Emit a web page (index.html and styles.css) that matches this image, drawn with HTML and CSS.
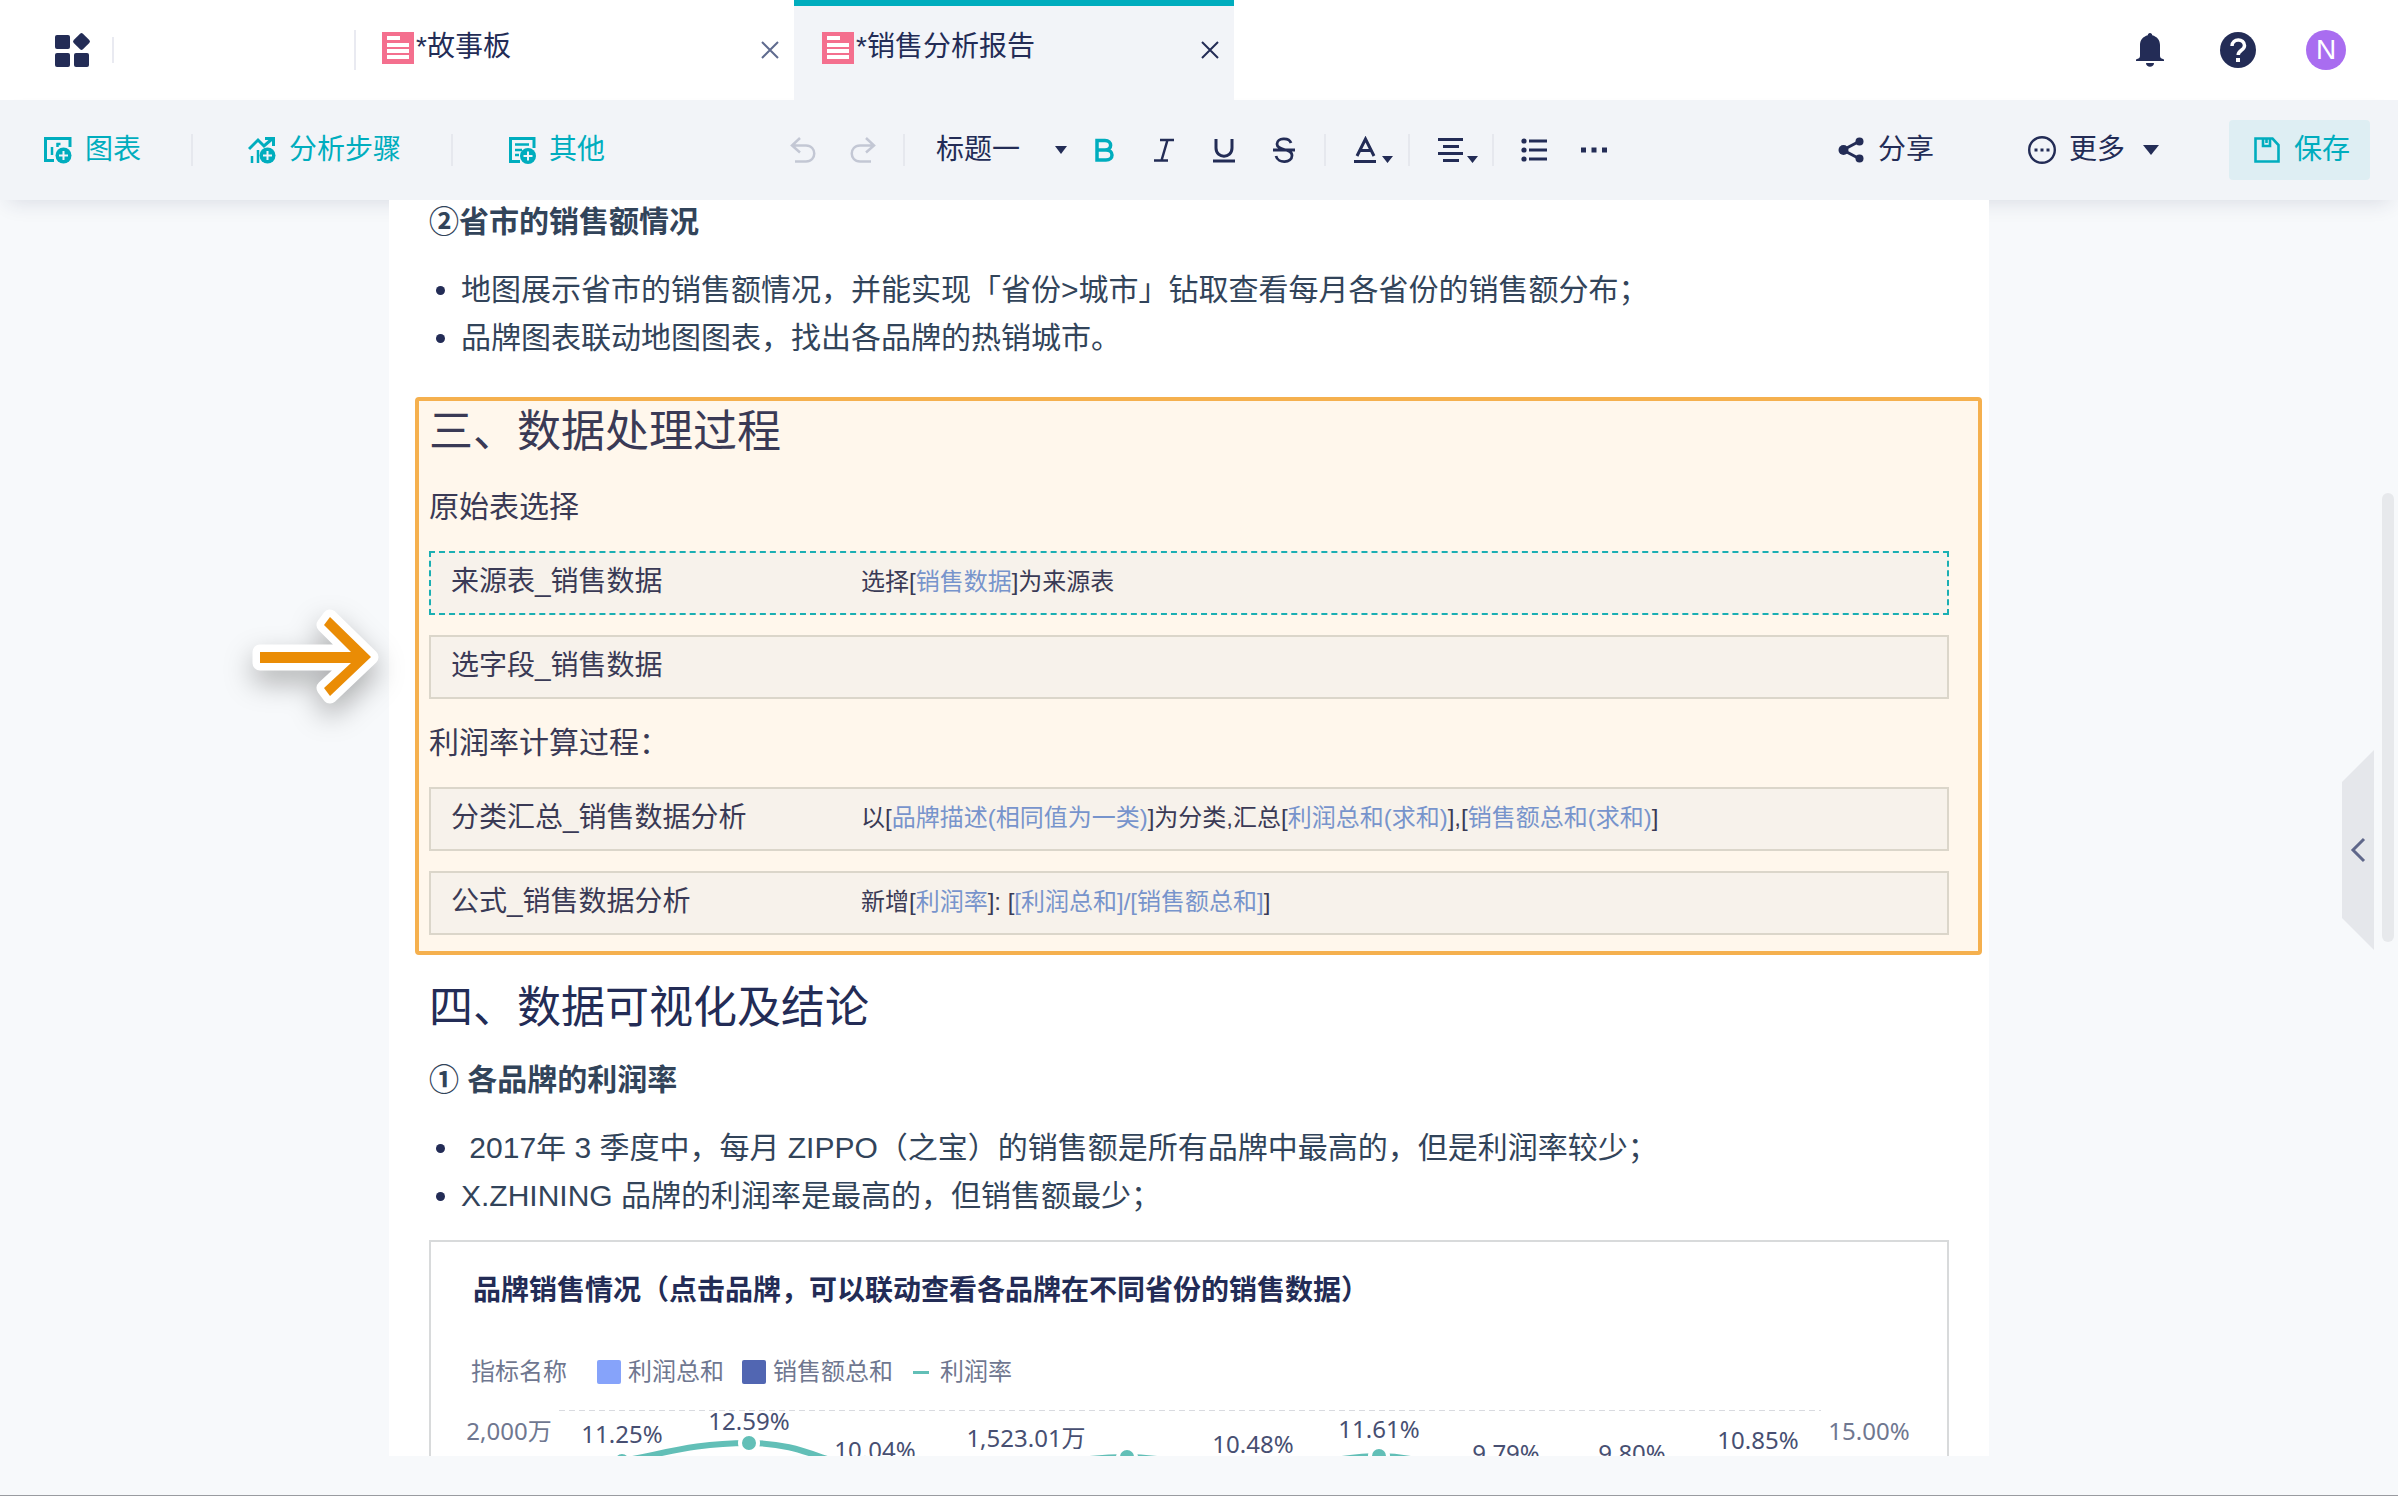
FILE: index.html
```html
<!DOCTYPE html>
<html lang="zh-CN">
<head>
  <meta charset="UTF-8">
  <meta name="viewport" content="width=device-width, initial-scale=1.0">
  <title>销售分析报告</title>
  <link rel="stylesheet" href="styles.css">
</head>
<body>
  <header class="topbar">
    <button class="icon-btn home" aria-label="主页">
      <svg width="36" height="36" viewBox="0 0 36 36" fill="currentColor">
        <rect x="0" y="3" width="15" height="14" rx="2"/>
        <rect x="0" y="21" width="15" height="14" rx="2"/>
        <rect x="19" y="21" width="15" height="14" rx="2"/>
        <rect x="20" y="3" width="13" height="13" rx="2" transform="rotate(45 26.5 9.5)"/>
      </svg>
    </button>
    <nav class="tabs">
      <div class="tab">
        <svg class="doc" width="32" height="32" viewBox="0 0 32 32">
          <rect width="32" height="32" fill="#f46f8e"/>
          <path d="M5 4h13v4H5zM5 11h22v4H5zM5 17h22v4H5zM5 23h22v4H5z" fill="#fff"/>
        </svg>
        <a href="#" class="tab-name">*故事板</a>
        <button class="icon-btn close" aria-label="关闭">
          <svg width="20" height="20" viewBox="0 0 20 20" fill="none" stroke="currentColor" stroke-width="2"><path d="M2 2l16 16M18 2L2 18"/></svg>
        </button>
      </div>
      <div class="tab active">
        <svg class="doc" width="32" height="32" viewBox="0 0 32 32">
          <rect width="32" height="32" fill="#f46f8e"/>
          <path d="M5 4h13v4H5zM5 11h22v4H5zM5 17h22v4H5zM5 23h22v4H5z" fill="#fff"/>
        </svg>
        <a href="#" class="tab-name">*销售分析报告</a>
        <button class="icon-btn close" aria-label="关闭">
          <svg width="20" height="20" viewBox="0 0 20 20" fill="none" stroke="currentColor" stroke-width="2"><path d="M2 2l16 16M18 2L2 18"/></svg>
        </button>
      </div>
    </nav>
    <div class="account">
      <button class="icon-btn" aria-label="消息">
        <svg width="36" height="36" viewBox="0 0 36 36" fill="currentColor">
          <path d="M18 1c1.500 0 2 1 2.200 2.200C25 4.500 28 8 28 13v11c0 2 1.500 2.500 4 3.500V29H4v-1.500c2.500-1 4-1.500 4-3.500V13c0-5 3-8.500 7.800-9.800C16 2 16.500 1 18 1zM14 31h8c0 5-8 5-8 0z"/>
        </svg>
      </button>
      <button class="icon-btn" aria-label="帮助">
        <svg width="36" height="36" viewBox="0 0 36 36">
          <circle cx="18" cy="18" r="18" fill="currentColor"/>
          <path d="M12 14c0-8 12.500-8 12.500-.5 0 5-6.300 4.500-6.300 9.500" fill="none" stroke="#fff" stroke-width="3.500"/>
          <rect x="16" y="26" width="4" height="4" fill="#fff"/>
        </svg>
      </button>
      <button class="avatar">N</button>
    </div>
  </header>

  <div class="toolbar">
    <div class="group">
      <button class="tool insert">
        <svg width="28" height="28" viewBox="0 0 28 28" fill="none" stroke="currentColor" stroke-width="3">
          <path d="M26 11V2.500H1.500v22H10"/><path d="M8 11v8M12.500 8h4M13.500 7v4" stroke-width="2.500"/>
          <circle cx="19.500" cy="19.500" r="8" fill="currentColor" stroke="none"/><path d="M19.500 15v9M15 19.500h9" stroke="#f2f4f8" stroke-width="2"/>
        </svg>图表
      </button>
      <span class="divider"></span>
      <button class="tool insert">
        <svg width="28" height="28" viewBox="0 0 28 28" fill="none" stroke="currentColor" stroke-width="3">
          <path d="M1 13l9-9 6 6 8-7M17 2.500h8.500V10"/><path d="M4 20v7M10 14v13" stroke-width="2.500"/>
          <circle cx="19.500" cy="19.500" r="8" fill="currentColor" stroke="none"/><path d="M19.500 15v9M15 19.500h9" stroke="#f2f4f8" stroke-width="2"/>
        </svg>分析步骤
      </button>
      <span class="divider"></span>
      <button class="tool insert">
        <svg width="28" height="28" viewBox="0 0 28 28" fill="none" stroke="currentColor" stroke-width="3">
          <path d="M26 12V2.500H2.500v23H12"/><path d="M7 8.500h14M7 14h7M7 19h4" stroke-width="2.500"/>
          <circle cx="20" cy="20" r="8" fill="currentColor" stroke="none"/><path d="M20 15.500v9M15.500 20h9" stroke="#f2f4f8" stroke-width="2"/>
        </svg>其他
      </button>
    </div>

    <div class="group edit">
      <button class="fmt muted" aria-label="撤销">
        <svg width="28" height="28" viewBox="0 0 28 28" fill="none" stroke="currentColor" stroke-width="2.500"><path d="M11 2L3 9.500l8 7M3 9.500h14c11 0 11 16 0 16H6"/></svg>
      </button>
      <button class="fmt muted" aria-label="重做">
        <svg width="28" height="28" viewBox="0 0 28 28" fill="none" stroke="currentColor" stroke-width="2.500"><path d="M17 2l8 7.500-8 7M25 9.500H11c-11 0-11 16 0 16h11"/></svg>
      </button>
      <span class="divider"></span>
      <div class="select-wrap">
        <select class="style-select" aria-label="段落样式">
          <option>标题一</option>
          <option>标题二</option>
          <option>正文</option>
        </select>
      </div>
      <button class="fmt on" aria-label="加粗">
        <svg width="28" height="28" viewBox="0 0 28 28" fill="none" stroke="currentColor" stroke-width="3.500"><path d="M7 4.500h8c7.500 0 7.500 9.500 0 9.500H7h9c8 0 8 10 0 10H7zM7 3v22"/></svg>
      </button>
      <button class="fmt" aria-label="斜体">
        <svg width="28" height="28" viewBox="0 0 28 28" fill="none" stroke="currentColor" stroke-width="2.500"><path d="M10 4h14M4 24.500h14M17.500 4l-6 20.500"/></svg>
      </button>
      <button class="fmt" aria-label="下划线">
        <svg width="28" height="28" viewBox="0 0 28 28" fill="none" stroke="currentColor" stroke-width="3"><path d="M6 3v9c0 11 16 11 16 0V3M3 25h22"/></svg>
      </button>
      <button class="fmt" aria-label="删除线">
        <svg width="28" height="28" viewBox="0 0 28 28" fill="none" stroke="currentColor" stroke-width="2.800"><path d="M21 7C19 1 7 1.500 7 8c0 7 15 4 15 11.500C22 27 8 28 6 20M3 14h22"/></svg>
      </button>
      <span class="divider"></span>
      <button class="fmt wide" aria-label="文字颜色">
        <svg width="44" height="28" viewBox="0 0 44 28"><path d="M3 20L11.500 3 20 20M6 14.500h11" fill="none" stroke="currentColor" stroke-width="3"/><path d="M0 24h22v3H0zM28 20h11l-5.500 7z" fill="currentColor"/></svg>
      </button>
      <span class="divider"></span>
      <button class="fmt wide" aria-label="对齐">
        <svg width="44" height="28" viewBox="0 0 44 28" fill="currentColor"><path d="M0 2h25v3H0zM5 9h16v3H5zM0 16h25v3H0zM5 23h16v3H5zM29 20h11l-5.500 7z"/></svg>
      </button>
      <span class="divider"></span>
      <button class="fmt" aria-label="列表">
        <svg width="28" height="28" viewBox="0 0 28 28" fill="currentColor"><circle cx="4" cy="5" r="2.600"/><circle cx="4" cy="14" r="2.600"/><circle cx="4" cy="23" r="2.600"/><path d="M9 3.500h18v3H9zM9 12.500h18v3H9zM9 21.500h18v3H9z"/></svg>
      </button>
      <button class="fmt" aria-label="更多格式">
        <svg width="28" height="28" viewBox="0 0 28 28" fill="currentColor"><path d="M1 11.500h5v5H1zM11.500 11.500h5v5h-5zM22 11.500h5v5h-5z"/></svg>
      </button>
    </div>

    <div class="group actions">
      <button class="tool">
        <svg width="28" height="28" viewBox="0 0 28 28" fill="currentColor"><path d="M22 5.500L6 14l16 8.500" fill="none" stroke="currentColor" stroke-width="3"/><circle cx="6.500" cy="14" r="5"/><circle cx="22.500" cy="5.500" r="4"/><circle cx="22.500" cy="22.500" r="4"/></svg>分享
      </button>
      <button class="tool more">
        <svg width="28" height="28" viewBox="0 0 28 28" fill="currentColor"><circle cx="14" cy="14" r="12.800" fill="none" stroke="currentColor" stroke-width="2.400"/><path d="M6.500 12.500h3v3h-3zM12.500 12.500h3v3h-3zM18.500 12.500h3v3h-3z"/></svg>更多<span class="caret"></span>
      </button>
      <button class="tool save">
        <svg width="28" height="28" viewBox="0 0 28 28" fill="none" stroke="currentColor" stroke-width="2.600"><path d="M2.500 2.500h17l6 6.500v16.500h-23z"/><path d="M10 2.500V10h7V2.500"/><path d="M13.500 3v4"/></svg>保存
      </button>
    </div>
  </div>

  <main class="workspace">
    <article class="paper">
      <h3>②省市的销售额情况</h3>
      <ul>
        <li>地图展示省市的销售额情况，并能实现「省份&gt;城市」钻取查看每月各省份的销售额分布；</li>
        <li>品牌图表联动地图图表，找出各品牌的热销城市。</li>
      </ul>

      <section class="highlight">
        <svg class="pointer" width="128" height="98" viewBox="0 0 128 98">
          <path d="M77 9l41 40-41 39-6-8 27-25H7V44h91L71 17z" fill="#fff" stroke="#fff" stroke-width="15" stroke-linejoin="round"/>
          <path d="M77 9l41 40-41 39-6-8 27-25H7V44h91L71 17z" fill="#ea8c05"/>
        </svg>
        <h2>三、数据处理过程</h2>
        <p>原始表选择</p>
        <div class="step selected">
          <span class="step-name">来源表_销售数据</span>
          <span class="step-info">选择[<em>销售数据</em>]为来源表</span>
        </div>
        <div class="step">
          <span class="step-name">选字段_销售数据</span>
        </div>
        <p>利润率计算过程：</p>
        <div class="step">
          <span class="step-name">分类汇总_销售数据分析</span>
          <span class="step-info">以[<em>品牌描述(相同值为一类)</em>]为分类,汇总[<em>利润总和(求和)</em>],[<em>销售额总和(求和)</em>]</span>
        </div>
        <div class="step">
          <span class="step-name">公式_销售数据分析</span>
          <span class="step-info">新增[<em>利润率</em>]: [<em>[利润总和]/[销售额总和]</em>]</span>
        </div>
      </section>

      <h2>四、数据可视化及结论</h2>
      <h3>① 各品牌的利润率</h3>
      <ul>
        <li>&nbsp;2017年 3 季度中，每月 ZIPPO（之宝）的销售额是所有品牌中最高的，但是利润率较少；</li>
        <li>X.ZHINING 品牌的利润率是最高的，但销售额最少；</li>
      </ul>

      <section class="card">
        <h4>品牌销售情况（点击品牌，可以联动查看各品牌在不同省份的销售数据）</h4>
        <div class="legend">
          <span class="legend-title">指标名称</span>
          <span class="legend-item"><i class="swatch light"></i>利润总和</span>
          <span class="legend-item"><i class="swatch dark"></i>销售额总和</span>
          <span class="legend-item line"><i class="dash"></i>利润率</span>
        </div>
        <svg class="chart" viewBox="0 0 1516 120">
          <path class="grid" d="M128 22.500H1390"/>
          <path class="curve" d="M191 73C235 65 265 55 318 55S390 74 444 84S520 88 570 83S650 69 696 69S770 82 822 82S900 68 948 68S1020 88 1075 88S1150 90 1201 90S1280 79 1327 77"/>
          <g class="dots">
            <circle cx="191" cy="73" r="9"/>
            <circle cx="318" cy="55" r="9"/>
            <circle cx="444" cy="84" r="9"/>
            <circle cx="570" cy="83" r="9"/>
            <circle cx="696" cy="69" r="9"/>
            <circle cx="822" cy="82" r="9"/>
            <circle cx="948" cy="68" r="9"/>
          </g>
          <g class="labels">
            <text x="191" y="55">11.25%</text>
            <text x="318" y="42">12.59%</text>
            <text x="444" y="71">10.04%</text>
            <text x="595" y="59">1,523.01万</text>
            <text x="822" y="65">10.48%</text>
            <text x="948" y="50">11.61%</text>
            <text x="1075" y="74">9.79%</text>
            <text x="1201" y="74">9.80%</text>
            <text x="1327" y="61">10.85%</text>
          </g>
          <g class="labels axis">
            <text x="78" y="52">2,000万</text>
            <text x="1438" y="52">15.00%</text>
          </g>
        </svg>
      </section>
    </article>
    <button class="panel-toggle" aria-label="展开面板">
      <svg width="16" height="26" viewBox="0 0 16 26" fill="none" stroke="currentColor" stroke-width="3"><path d="M14 2L3 13l11 11"/></svg>
    </button>
    <div class="scroll-thumb"></div>
  </main>
  <footer class="bottom"></footer>
</body>
</html>
```
FILE: styles.css
```css
* {
  box-sizing: border-box;
}

body {
  display: flex;
  flex-direction: column;
  height: 100vh;
  margin: 0;
  overflow: hidden;
  font-family: "Liberation Sans", "Noto Sans CJK SC", sans-serif;
  font-size: 28px;
  line-height: 40px;
  color: #232c56;
  background-color: #f7f9fb;
}

button {
  padding: 0;
  border: none;
  background: none;
  font: inherit;
  color: inherit;
  cursor: pointer;
}

svg {
  display: block;
  flex-shrink: 0;
}

.icon-btn {
  display: flex;
}

/* Top bar */
.topbar {
  display: flex;
  align-items: center;
  flex-shrink: 0;
  height: 100px;
  padding: 0 52px 0 55px;
  background-color: #fff;
}

.home {
  padding-right: 21px;
  border-right: 2px solid #e9eaf1;
  height: 26px;
  align-items: center;
}

.tabs {
  display: flex;
  height: 100%;
  margin-left: 240px;
}

.tab {
  position: relative;
  display: flex;
  align-items: center;
  width: 440px;
  padding: 0 14px 4px 28px;
}

/* separator on the left of an inactive tab */
.tab::before {
  content: "";
  position: absolute;
  left: 0;
  top: 30px;
  width: 2px;
  height: 40px;
  background-color: #e9eaf1;
}

.tab.active {
  background-color: #f2f4f8;
  box-shadow: inset 0 6px #00adbe;
}

.tab.active::before {
  display: none;
}

.tab-name {
  margin-left: 2px;
  padding-bottom: 2px;
  color: #232c56;
  text-decoration: none;
}

.close {
  margin: 4px 0 0 auto;
  color: #5f6b8f;
}

.active .close {
  color: #232c56;
}

.account {
  display: flex;
  align-items: center;
  gap: 48px;
  margin-left: auto;
}

.account .icon-btn {
  justify-content: center;
  width: 40px;
}

.avatar {
  width: 40px;
  height: 40px;
  border-radius: 50%;
  background-color: #a96df0;
  color: #fff;
}

/* Toolbar */
.toolbar {
  display: flex;
  align-items: center;
  flex-shrink: 0;
  height: 100px;
  padding: 0 28px 0 44px;
  background-color: #f2f4f8;
  box-shadow: 0 10px 20px -8px rgba(35, 44, 86, 0.14);
}

.group {
  display: flex;
  align-items: center;
}

.divider {
  width: 2px;
  height: 32px;
  margin: 0 10px;
  background-color: #e6e8ee;
}

.tool {
  display: flex;
  align-items: center;
  gap: 13px;
  white-space: nowrap;
}

.insert {
  color: #00adbe;
}

.insert + .divider {
  margin: 0 55px 0 50px;
}

.edit {
  margin-left: 168px;
}

.fmt {
  display: flex;
  justify-content: center;
  width: 60px;
}

.fmt.wide {
  justify-content: flex-end;
  width: 62px;
}

.muted {
  color: #c3c7d4;
}

.on {
  color: #00adbe;
}

.select-wrap {
  display: flex;
  align-items: center;
  width: 159px;
}

.select-wrap::after,
.caret {
  content: "";
  border: 6px solid transparent;
  border-top: 8px solid #232c56;
  border-bottom: 0;
}

.style-select {
  width: 140px;
  padding: 0 0 0 21px;
  border: none;
  appearance: none;
  background: none;
  font: inherit;
  color: inherit;
}

.actions {
  margin-left: auto;
}

.more {
  margin: 0 70px 0 94px;
}

.caret {
  border-width: 10px 8px 0;
  margin-left: 5px;
}

.save {
  height: 60px;
  padding: 0 20px 0 24px;
  border-radius: 4px;
  background-color: #deeef3;
  color: #00adbe;
}

/* Document */
.workspace {
  position: relative;
  z-index: 1;
  flex: 1;
  min-height: 0;
  padding: 0 20px 0 0;
  overflow: hidden;
}

.paper {
  max-width: 1600px;
  margin: 0 auto;
  padding: 1px 40px 0;
  background-color: #fff;
}

h2 {
  margin: 22px 0 20px;
  font-size: 44px;
  font-weight: 400;
  line-height: 62px;
}

h3 {
  margin: 0;
  font-size: 30px;
  line-height: 42px;
  color: #32445a;
}

ul {
  margin: 23px 0 0;
  padding-left: 32px;
  font-size: 30px;
  line-height: 48px;
}

li::marker {
  color: #232c56;
}

li {
  color: #32445a;
}

.highlight {
  position: relative;
  margin: 35px -33px 0 -14px;
  padding: 0 29px 16px 10px;
  border: 4px solid #f5b04e;
  border-radius: 4px;
  background-color: #fff7ec;
  color: #3a3a55;
}

.highlight h2 {
  margin: 0;
}

.highlight p {
  margin: 20px 0;
  font-size: 30px;
  line-height: 48px;
}

.pointer {
  position: absolute;
  right: 100%;
  top: 207px;
  margin-right: 38px;
  overflow: visible;
  filter: drop-shadow(0 12px 14px rgba(0, 0, 0, 0.3));
}

.step {
  display: flex;
  align-items: center;
  height: 64px;
  padding: 0 0 2px 20px;
  border: 2px solid #dbd6ca;
  background-color: #f7f2eb;
}

.step + .step {
  margin-top: 20px;
}

.step.selected {
  border: 2px dashed #1aafb3;
}

.step-name {
  width: 410px;
}

.step-info {
  font-size: 24px;
}

.step-info em {
  font-style: normal;
  color: #7794cc;
}

/* Chart card */
.card {
  margin-top: 20px;
  padding-top: 29px;
  border: 2px solid #d8dadb;
}

h4 {
  margin: 0 42px;
  font-size: 28px;
  line-height: 40px;
}

.legend {
  display: flex;
  align-items: center;
  gap: 18px;
  margin: 45px 40px 0;
  font-size: 24px;
  line-height: 32px;
  color: #6f7790;
}

.legend-title {
  margin-right: 12px;
}

.legend-item {
  display: flex;
  align-items: center;
  gap: 7px;
}

.swatch {
  width: 24px;
  height: 24px;
  border-radius: 2px;
}

.swatch.light {
  background-color: #86a3fa;
}

.swatch.dark {
  background-color: #5166b2;
}

.legend-item.line {
  gap: 11px;
  margin-left: 2px;
}

.dash {
  width: 16px;
  height: 3px;
  background-color: #62bfb7;
}

.chart {
  width: 100%;
}

.grid {
  fill: none;
  stroke: #d9dbe0;
  stroke-dasharray: 6 4;
}

.curve {
  fill: none;
  stroke: #62bfb7;
  stroke-width: 6;
}

.dots {
  fill: #62bfb7;
  stroke: #fff;
  stroke-width: 4;
}

.labels {
  font-family: "Noto Sans", "Noto Sans CJK SC", sans-serif;
  font-size: 24px;
  text-anchor: middle;
  fill: #474f72;
}

.labels.axis {
  fill: #6f7790;
}

/* Right edge */
.panel-toggle {
  position: absolute;
  right: 24px;
  top: 550px;
  display: flex;
  align-items: center;
  justify-content: center;
  width: 32px;
  height: 200px;
  background-color: #e5e7eb;
  color: #5f678a;
  clip-path: polygon(0 16%, 100% 0, 100% 100%, 0 84%);
}

.scroll-thumb {
  position: absolute;
  right: 4px;
  top: 293px;
  width: 12px;
  height: 449px;
  border-radius: 6px;
  background-color: #e7e9ec;
}

.bottom {
  flex-shrink: 0;
  height: 40px;
  border-bottom: 1px solid #999ba0;
}
```
